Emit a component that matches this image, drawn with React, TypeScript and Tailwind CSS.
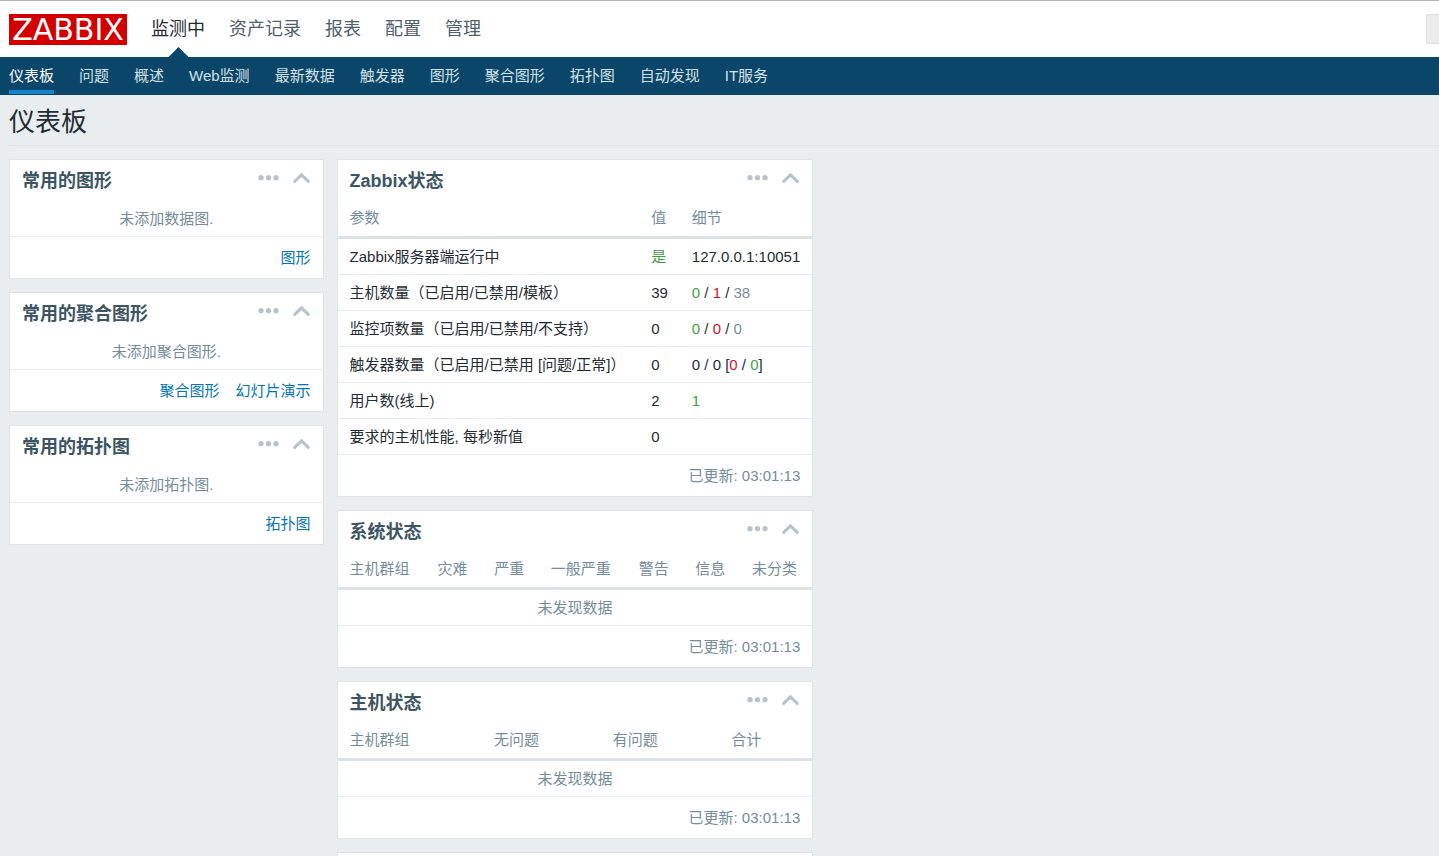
import type { ReactNode } from 'react'

const mainMenu = ['监测中', '资产记录', '报表', '配置', '管理']

const subMenu = [
  '仪表板',
  '问题',
  '概述',
  'Web监测',
  '最新数据',
  '触发器',
  '图形',
  '聚合图形',
  '拓扑图',
  '自动发现',
  'IT服务',
]

const favourites = [
  { title: '常用的图形', empty: '未添加数据图.', links: ['图形'] },
  { title: '常用的聚合图形', empty: '未添加聚合图形.', links: ['聚合图形', '幻灯片演示'] },
  { title: '常用的拓扑图', empty: '未添加拓扑图.', links: ['拓扑图'] },
]

const Green = ({ children }: { children: ReactNode }) => (
  <span className="text-[#429e47]">{children}</span>
)
const Red = ({ children }: { children: ReactNode }) => (
  <span className="text-[#dc0d2b]">{children}</span>
)
const Grey = ({ children }: { children: ReactNode }) => (
  <span className="text-[#768d99]">{children}</span>
)

const statusRows: { name: string; value: ReactNode; details: ReactNode }[] = [
  { name: 'Zabbix服务器端运行中', value: <Green>是</Green>, details: '127.0.0.1:10051' },
  {
    name: '主机数量（已启用/已禁用/模板）',
    value: '39',
    details: <><Green>0</Green> / <Red>1</Red> / <Grey>38</Grey></>,
  },
  {
    name: '监控项数量（已启用/已禁用/不支持）',
    value: '0',
    details: <><Green>0</Green> / <Red>0</Red> / <Grey>0</Grey></>,
  },
  {
    name: '触发器数量（已启用/已禁用 [问题/正常]）',
    value: '0',
    details: <>0 / 0 [<Red>0</Red> / <Green>0</Green>]</>,
  },
  { name: '用户数(线上)', value: '2', details: <Green>1</Green> },
  { name: '要求的主机性能, 每秒新值', value: '0', details: null },
]

function Widget({ title, children, footer }: { title: string; children: ReactNode; footer: ReactNode }) {
  return (
    <section className="border border-[#dfe4e7] bg-white">
      <div className="flex h-10 items-center justify-between px-3">
        <h4 className="pt-px text-lg leading-6 font-bold text-[#3c5563]">{title}</h4>
        <div className="flex items-center gap-3 pb-1">
          <button type="button" aria-label="菜单" className="cursor-pointer">
            <svg width="22" height="14" viewBox="0 0 22 14" fill="#b6c3ca">
              <circle cx="4" cy="6.7" r="2.6" />
              <circle cx="11.5" cy="6.7" r="2.6" />
              <circle cx="19" cy="6.7" r="2.6" />
            </svg>
          </button>
          <button type="button" aria-label="收起" className="cursor-pointer">
            <svg width="20" height="14" viewBox="0 0 20 14" fill="none" stroke="#b6c3ca" strokeWidth="3" strokeLinecap="round">
              <path d="M3.7 10.4 10.5 3.8 17.3 10.4" />
            </svg>
          </button>
        </div>
      </div>
      {children}
      <div className="flex h-[41px] items-center justify-end gap-4 px-3 text-[#768d99]">{footer}</div>
    </section>
  )
}

function HeadRow({ labels }: { labels: string[] }) {
  return (
    <thead>
      <tr>
        {labels.map((label) => (
          <th
            key={label}
            className="h-[39px] border-b-3 border-[#dce2e5] px-3 text-left font-normal whitespace-nowrap text-[#768d99]"
          >
            {label}
          </th>
        ))}
      </tr>
    </thead>
  )
}

function EmptyTable({ labels }: { labels: string[] }) {
  return (
    <table className="w-full border-separate border-spacing-0">
      <HeadRow labels={labels} />
      <tbody>
        <tr>
          <td colSpan={labels.length} className="h-9 border-b border-[#ebeef0] text-center text-[#768d99]">
            未发现数据
          </td>
        </tr>
      </tbody>
    </table>
  )
}

export default function App() {
  return (
    <div className="min-h-screen overflow-hidden bg-[#e9edf0] font-['Liberation_Sans','Noto_Sans_CJK_SC',sans-serif] text-[15px] leading-5 text-[#1f2c33]">
      <header>
        <div className="flex h-[57px] items-center border-t border-[#b3b3b3] bg-white pl-[9px]">
          <a
            href="#"
            className="flex h-[31px] w-[118px] items-center justify-center bg-[#d40000] pt-px font-['DejaVu_Sans',sans-serif] text-[30px] leading-none text-white"
          >
            ZABBIX
          </a>
          <nav className="flex h-full flex-1 gap-6 pl-6 text-lg">
            {mainMenu.map((item, i) => (
              <a
                key={item}
                href="#"
                className={
                  i === 0
                    ? 'relative flex items-center text-[#1f2c33]'
                    : 'flex items-center text-[#50606a]'
                }
              >
                {item}
                {i === 0 && (
                  <svg className="absolute bottom-0 left-1/2 -translate-x-1/2" width="22" height="10" viewBox="0 0 22 10">
                    <path d="M1.5 10 11.5 0 21.5 10Z" fill="#0a466a" />
                  </svg>
                )}
              </a>
            ))}
          </nav>
          <input
            type="text"
            aria-label="搜索"
            className="h-[30px] w-[13px] border border-r-0 border-[#e0e0e0] bg-[#ebebeb]"
          />
        </div>
        <nav className="flex h-[38px] gap-[25px] bg-[#0a466a] px-[9px] text-[#d5e1e8]">
          {subMenu.map((item, i) => (
            <a
              key={item}
              href="#"
              className={
                i === 0
                  ? 'mb-px flex items-center border-b-4 border-[#1283cc] pt-1 text-white'
                  : 'mb-px flex items-center border-b-4 border-transparent pt-1'
              }
            >
              {item}
            </a>
          ))}
        </nav>
      </header>

      <main className="pl-[9px]">
        <div className="flex h-[51px] items-center border-b border-[#dfe4e7]">
          <h1 className="pt-1 text-[26px] leading-8">仪表板</h1>
        </div>

        <div className="flex items-start gap-[13px] pt-[13px]">
          <div className="flex w-[22%] flex-col gap-[13px]">
            {favourites.map((fav) => (
              <Widget
                key={fav.title}
                title={fav.title}
                footer={fav.links.map((link) => (
                  <a key={link} href="#" className="text-[#0275b8]">
                    {link}
                  </a>
                ))}
              >
                <p className="flex h-[37px] items-center justify-center border-b border-[#ebeef0] pt-px text-[#768d99]">
                  {fav.empty}
                </p>
              </Widget>
            ))}
          </div>

          <div className="flex w-1/3 flex-col gap-[13px]">
            <Widget title="Zabbix状态" footer="已更新: 03:01:13">
              <table className="w-full border-separate border-spacing-0">
                <HeadRow labels={['参数', '值', '细节']} />
                <tbody>
                  {statusRows.map((row) => (
                    <tr
                      key={row.name}
                      className="[&>td]:h-9 [&>td]:border-b [&>td]:border-[#ebeef0] [&>td]:px-3 [&>td]:whitespace-nowrap"
                    >
                      <td className="w-full">{row.name}</td>
                      <td>{row.value}</td>
                      <td>{row.details}</td>
                    </tr>
                  ))}
                </tbody>
              </table>
            </Widget>
            <Widget title="系统状态" footer="已更新: 03:01:13">
              <EmptyTable labels={['主机群组', '灾难', '严重', '一般严重', '警告', '信息', '未分类']} />
            </Widget>
            <Widget title="主机状态" footer="已更新: 03:01:13">
              <EmptyTable labels={['主机群组', '无问题', '有问题', '合计']} />
            </Widget>
            <div className="h-10 border border-[#dfe4e7] bg-white" />
          </div>
        </div>
      </main>
    </div>
  )
}
